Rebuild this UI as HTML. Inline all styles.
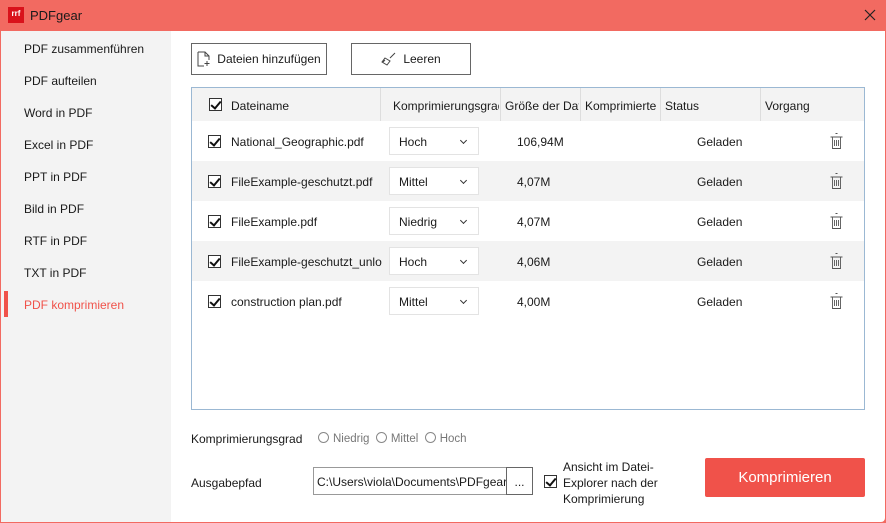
<!DOCTYPE html><html><head><meta charset="utf-8"><style>
*{box-sizing:border-box;margin:0;padding:0}
body{width:886px;height:523px;overflow:hidden;font-family:"Liberation Sans",sans-serif;font-size:12px;color:#1a1a1a;background:#f26a61;position:relative}
.abs{position:absolute}
.title{left:0;top:0;width:886px;height:31px;background:#f26a61}
.side{left:1px;top:31px;width:170px;height:491px;background:#f3f3f3}
.main{left:171px;top:31px;width:714px;height:491px;background:#fff;border-bottom-right-radius:4px}
.nav{left:24px;font-size:12px}
.btn{border:1px solid #666;background:#fff;height:32px;display:flex;align-items:center;justify-content:center;gap:6px}
.tbl{left:191px;top:87px;width:674px;height:323px;border:1px solid #9bb8d3;background:#fff}
.hdr{left:0;top:0;width:672px;height:33px;background:#f3f3f3}
.row{left:0;width:672px;height:40px}
.cb{width:13px;height:13px;border:1px solid #333;background:#fff;position:absolute}
.cb:after{content:"";position:absolute;left:3px;top:0px;width:4px;height:8px;border:solid #111;border-width:0 2px 2px 0;transform:rotate(40deg)}
.sel{position:absolute;width:90px;height:28px;border:1px solid #e3e3e3;background:#fff;padding:7px 9px}
.sel:after{content:"";position:absolute;right:12px;top:10px;width:4px;height:4px;border:solid #333;border-width:0 1.3px 1.3px 0;transform:rotate(45deg)}
.sep{position:absolute;top:0;width:1px;height:33px;background:#ddd}
.radio{display:inline-block;width:11px;height:11px;border:1px solid #888;border-radius:50%;vertical-align:-1px;margin-right:4px}
.g{color:#777}
</style></head><body>
<div class="abs title"></div>
<div class="abs" style="left:8px;top:7px;width:16px;height:16px;background:#d9121b;color:#fff;font-size:8px;font-weight:bold;line-height:14px;text-align:center">rrf</div>
<div class="abs" style="left:30px;top:8px;color:#1a1a1a;font-size:13px">PDFgear</div>
<svg class="abs" style="left:864px;top:9px" width="12" height="12" viewBox="0 0 12 12"><path d="M1 1l10 10M11 1L1 11" stroke="#222" stroke-width="1.2"/></svg>
<div class="abs side"></div>
<div class="abs nav" style="top:42px">PDF zusammenführen</div>
<div class="abs nav" style="top:74px">PDF aufteilen</div>
<div class="abs nav" style="top:106px">Word in PDF</div>
<div class="abs nav" style="top:138px">Excel in PDF</div>
<div class="abs nav" style="top:170px">PPT in PDF</div>
<div class="abs nav" style="top:202px">Bild in PDF</div>
<div class="abs nav" style="top:234px">RTF in PDF</div>
<div class="abs nav" style="top:266px">TXT in PDF</div>
<div class="abs" style="left:4px;top:291px;width:4px;height:26px;background:#f0524a"></div>
<div class="abs nav" style="top:298px;color:#f0524a">PDF komprimieren</div>
<div class="abs main"></div>
<div class="abs btn" style="left:191px;top:43px;width:136px"><svg width="14" height="16" viewBox="0 0 14 16"><path d="M1 1h7l4 4v4M1 1v14h6M8 1v4h4M10 10v5M7.5 12.5h5" fill="none" stroke="#444"/></svg>Dateien hinzufügen</div>
<div class="abs btn" style="left:351px;top:43px;width:120px"><svg width="16" height="14" viewBox="0 0 16 14"><path d="M14 1l-5 5M4 6l5 3-3 4-5-3zM2 10l2-2" fill="none" stroke="#444"/></svg>Leeren</div>
<div class="abs tbl">
<div class="abs hdr"></div>
<div class="sep" style="left:188px"></div><div class="sep" style="left:308px"></div><div class="sep" style="left:388px"></div><div class="sep" style="left:468px"></div><div class="sep" style="left:568px"></div>
<div class="cb" style="left:17px;top:10px"></div>
<div class="abs" style="left:39px;top:11px">Dateiname</div>
<div class="abs" style="left:201px;top:11px;width:106px;overflow:hidden;white-space:nowrap">Komprimierungsgrad</div>
<div class="abs" style="left:313px;top:11px;width:74px;overflow:hidden;white-space:nowrap">Größe der Datei</div>
<div class="abs" style="left:393px;top:11px;width:74px;overflow:hidden;white-space:nowrap">Komprimierte</div>
<div class="abs" style="left:473px;top:11px">Status</div>
<div class="abs" style="left:573px;top:11px">Vorgang</div>
<div class="abs row" style="top:33px;background:#fff"></div>
<div class="abs row" style="top:73px;background:#f3f3f3"></div>
<div class="abs row" style="top:113px;background:#fff"></div>
<div class="abs row" style="top:153px;background:#f3f3f3"></div>
<div class="abs row" style="top:193px;background:#fff"></div>
</div>
<div id="rows"></div>
<script>
var d=[["National_Geographic.pdf","Hoch","106,94M"],["FileExample-geschutzt.pdf","Mittel","4,07M"],["FileExample.pdf","Niedrig","4,07M"],["FileExample-geschutzt_unlo","Hoch","4,06M"],["construction plan.pdf","Mittel","4,00M"]];
var h="";d.forEach(function(r,i){var y=121+i*40;
h+='<div class="cb" style="left:208px;top:'+(y+14)+'px"></div>';
h+='<div class="abs" style="left:231px;top:'+(y+14)+'px">'+r[0]+'</div>';
h+='<div class="sel" style="left:389px;top:'+(y+6)+'px">'+r[1]+'</div>';
h+='<div class="abs" style="left:517px;top:'+(y+14)+'px">'+r[2]+'</div>';
h+='<div class="abs" style="left:697px;top:'+(y+14)+'px">Geladen</div>';
h+='<svg class="abs" style="left:829px;top:'+(y+11)+'px" width="15" height="18" viewBox="0 0 15 18"><path d="M6.5 1.5h2M1.5 5h12M3.5 5v11.5h8V5M5.5 8v6M7.5 8v6M9.5 8v6" fill="none" stroke="#555" stroke-width="0.9"/></svg>';});
document.getElementById("rows").innerHTML=h;
</script>
<div class="abs" style="left:191px;top:432px">Komprimierungsgrad</div>
<div class="abs g" style="left:318px;top:432px;font-size:11.5px"><span class="radio"></span>Niedrig&nbsp; <span class="radio"></span>Mittel&nbsp; <span class="radio"></span>Hoch</div>
<div class="abs" style="left:191px;top:476px">Ausgabepfad</div>
<div class="abs" style="left:313px;top:467px;width:194px;height:28px;border:1px solid #999;padding:7px 3px;white-space:nowrap;overflow:hidden">C:\Users\viola\Documents\PDFgear</div>
<div class="abs" style="left:506px;top:467px;width:27px;height:28px;border:1px solid #666;text-align:center;padding-top:7px">...</div>
<div class="cb" style="left:544px;top:475px"></div>
<div class="abs" style="left:563px;top:459px;line-height:16px">Ansicht im Datei-<br>Explorer nach der<br>Komprimierung</div>
<div class="abs" style="left:705px;top:458px;width:160px;height:39px;background:#f0524a;color:#fff;font-size:15px;text-align:center;line-height:39px;border-radius:2px">Komprimieren</div>
</body></html>
